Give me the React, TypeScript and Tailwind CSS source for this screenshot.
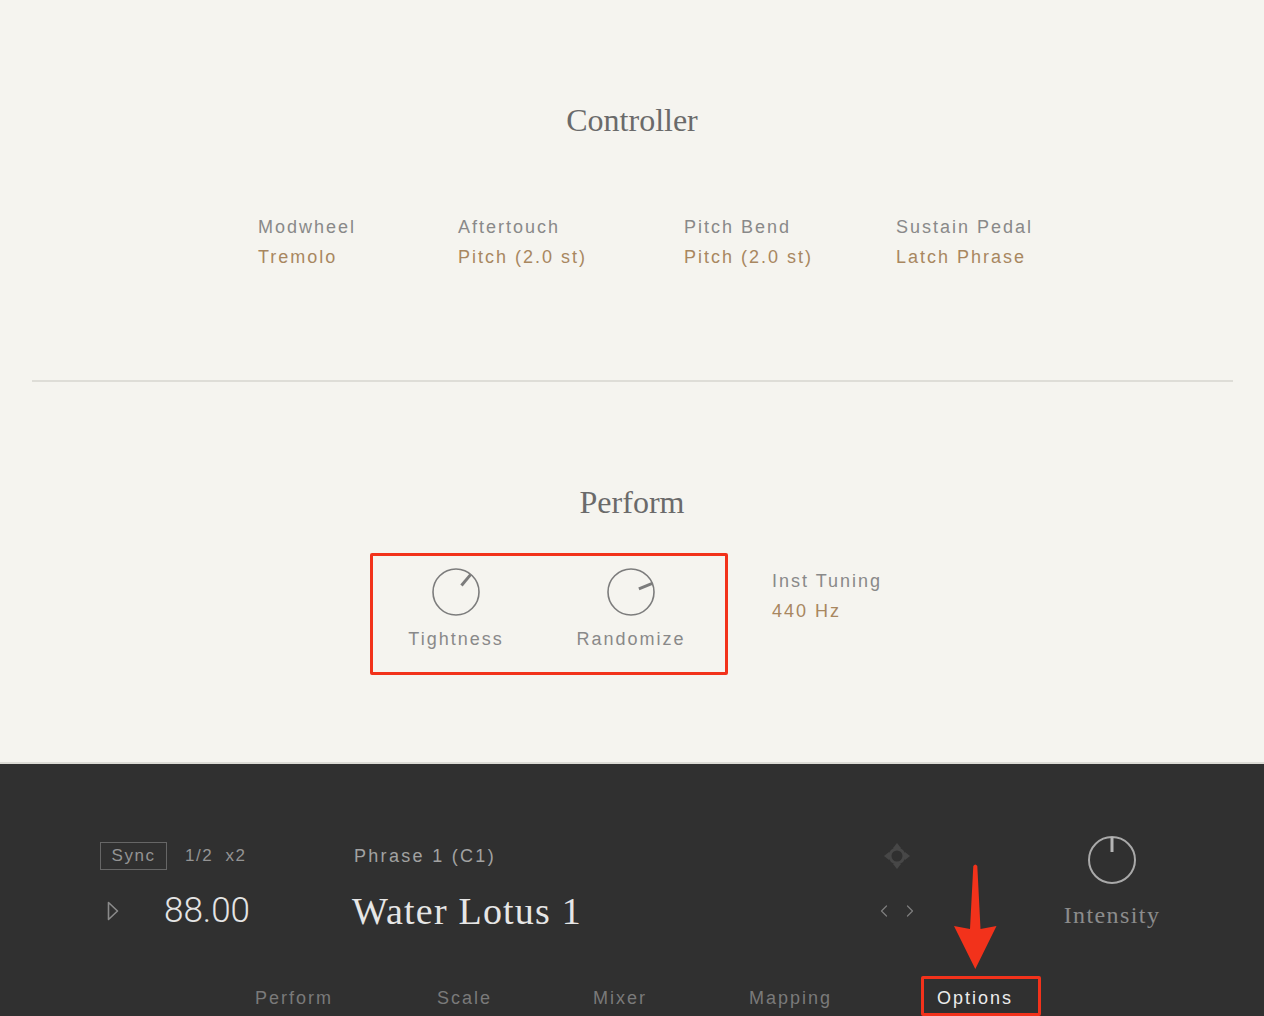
import { ChevronLeft, ChevronRight } from 'lucide-react';

const SANS = "font-['Liberation_Sans',Arial,sans-serif]";
const SERIF = "font-['Liberation_Serif','Times_New_Roman',serif]";

const controllers = [
  { label: 'Modwheel', value: 'Tremolo' },
  { label: 'Aftertouch', value: 'Pitch (2.0 st)' },
  { label: 'Pitch Bend', value: 'Pitch (2.0 st)' },
  { label: 'Sustain Pedal', value: 'Latch Phrase' },
];

const tabs = ['Perform', 'Scale', 'Mixer', 'Mapping', 'Options'];

// simple rotary knob: ring plus a pointer at `angle` degrees from 12 o'clock
const Knob = ({ angle, ring, pointer, stroke = 1.6, inner = 8.5 }: { angle: number; ring: string; pointer: string; stroke?: number; inner?: number }) => {
  const r = 23;
  const rad = (angle * Math.PI) / 180;
  const x1 = 25 + Math.sin(rad) * inner;
  const y1 = 25 - Math.cos(rad) * inner;
  const x2 = 25 + Math.sin(rad) * r;
  const y2 = 25 - Math.cos(rad) * r;
  return (
    <svg width="50" height="50" viewBox="0 0 50 50">
      <circle cx="25" cy="25" r={r} fill="none" stroke={ring} strokeWidth={stroke} />
      <line x1={x1} y1={y1} x2={x2} y2={y2} stroke={pointer} strokeWidth={3} />
    </svg>
  );
};

const NavPad = () => (
  <svg width="28" height="28" viewBox="0 0 28 28" fill="#474747">
    <circle cx="14" cy="14" r="7" fill="none" stroke="#474747" strokeWidth="3" />
    <path d="M14 1 L18 6 L10 6 Z" />
    <path d="M14 27 L18 22 L10 22 Z" />
    <path d="M1 14 L6 10 L6 18 Z" />
    <path d="M27 14 L22 10 L22 18 Z" />
  </svg>
);

const RedArrow = () => (
  <svg width="50" height="108" viewBox="0 0 50 108" className="absolute left-[14px] top-[-123px]">
    <path d="M22.3 3 Q24.3 0 26.3 3 L29.5 66 L45.5 63 L24.3 106 L3 63 L19 66 Z" fill="#f2321b" />
  </svg>
);

export default function App() {
  return (
    <div className={`w-[1264px] h-[1016px] overflow-hidden flex flex-col ${SANS}`}>
      {/* options panel */}
      <div className="h-[762px] bg-[#f5f4ef] flex flex-col">
        <h2 className={`pt-[100px] text-center text-[32px] leading-[40px] text-[#6a6a6a] ${SERIF}`}>Controller</h2>

        <div className="mt-[72px] pl-[258px] grid grid-cols-[200px_226px_212px_auto] text-[18px] leading-[30px] tracking-[2px]">
          {controllers.map((c) => (
            <div key={c.label} className="flex flex-col">
              <span className="text-[#898989]">{c.label}</span>
              <span className="text-[#a8875f]">{c.value}</span>
            </div>
          ))}
        </div>

        <div className="mt-[108px] mx-[32px] mr-[31px] h-[2px] bg-[#deddd7]" />

        <h2 className={`mt-[100px] text-center text-[32px] leading-[40px] text-[#6a6a6a] ${SERIF}`}>Perform</h2>

        <div className="mt-[31px] ml-[370px] flex items-start">
          <div className="w-[358px] h-[122px] border-[3px] border-[#f2321b] rounded-[2px] pt-[11px] pl-[23px] flex gap-[55px]">
            {[
              { name: 'Tightness', angle: 40 },
              { name: 'Randomize', angle: 68 },
            ].map((k) => (
              <div key={k.name} className="w-[120px] flex flex-col items-center">
                <Knob angle={k.angle} ring="#7c7c7c" pointer="#7c7c7c" />
                <span className="mt-[10px] text-[18px] leading-[24px] tracking-[2px] text-[#898989]">{k.name}</span>
              </div>
            ))}
          </div>
          <div className="ml-[44px] mt-[13px] flex flex-col text-[18px] leading-[30px] tracking-[2px]">
            <span className="text-[#898989]">Inst Tuning</span>
            <span className="text-[#a8875f]">440 Hz</span>
          </div>
        </div>
      </div>

      {/* transport bar */}
      <div className="flex-1 border-t-2 border-[#dcdbd5] bg-[#303030] flex flex-col">
        <div className="flex items-start pt-[78px]">
          <div className="ml-[100px] w-[252px] flex flex-col">
            <div className="h-[28px] flex items-center">
              <span className="h-[28px] w-[67px] border border-[#666] flex items-center justify-center text-[17px] tracking-[1.5px] text-[#949494]">
                Sync
              </span>
              <span className="ml-[18px] text-[17px] tracking-[1.5px] text-[#949494] whitespace-pre">1/2  x2</span>
            </div>
            <div className="mt-[21px] h-[40px] flex items-center">
              <svg width="14" height="22" viewBox="0 0 14 22" className="ml-[6px]">
                <path d="M2.5 2.5 L11.5 11 L2.5 19.5 Z" fill="none" stroke="#8a8a8a" strokeWidth="1.6" strokeLinejoin="round" />
              </svg>
              <span className="ml-[44px] text-[35px] leading-[40px] font-['Roboto',sans-serif] font-light text-[#e4e4e4]">88.00</span>
            </div>
          </div>

          <div className="w-[520px] flex flex-col">
            <div className="h-[28px] flex items-center pl-[2px] text-[18px] tracking-[2.3px] text-[#a2a2a2]">Phrase 1 (C1)</div>
            <div className={`mt-[21px] h-[40px] flex items-center text-[38px] leading-[40px] tracking-[1.2px] text-[#e6e6e6] ${SERIF}`}>
              Water Lotus 1
            </div>
          </div>

          <div className="w-[50px] flex flex-col items-center">
            <div className="h-[28px] flex items-center">
              <NavPad />
            </div>
            <div className="mt-[21px] h-[40px] flex items-center gap-[6px] text-[#7d7d7d]">
              <ChevronLeft size={20} strokeWidth={1.5} />
              <ChevronRight size={20} strokeWidth={1.5} />
            </div>
          </div>

          <div className="ml-[130px] w-[120px] -mt-[7px] flex flex-col items-center">
            <Knob angle={0} ring="#a9a9a9" pointer="#b4b4b4" stroke={2} inner={8} />
            <span className={`mt-[15px] text-[24px] leading-[30px] tracking-[1.4px] text-[#8c8c8c] ${SERIF}`}>Intensity</span>
          </div>
        </div>

        <nav className="mt-[55px] pl-[255px] grid grid-cols-[182px_156px_156px_188px_auto] text-[18px] leading-[24px] tracking-[2px]">
          {tabs.map((t) =>
            t === 'Options' ? (
              <span key={t} className="relative w-fit text-[#ececec]">
                <RedArrow />
                <span className="absolute left-[-16px] right-[-28px] top-[-10px] bottom-[-6px] border-[3px] border-[#f2321b] rounded-[2px]" />
                {t}
              </span>
            ) : (
              <span key={t} className="text-[#7a7a7a]">
                {t}
              </span>
            )
          )}
        </nav>
      </div>
    </div>
  );
}
